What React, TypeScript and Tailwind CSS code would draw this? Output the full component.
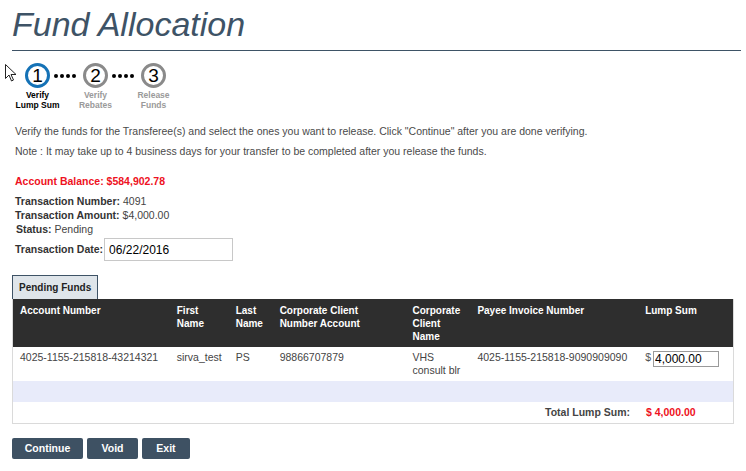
const font = { fontFamily: '"Liberation Sans", Arial, sans-serif' };

const steps = [
  { n: "1", top: "Verify", bottom: "Lump Sum", active: true },
  { n: "2", top: "Verify", bottom: "Rebates", active: false },
  { n: "3", top: "Release", bottom: "Funds", active: false },
];

const Dots = () => (
  <div className="h-[25px] flex items-center gap-[2px] ml-[4px] mr-[7px]">
    {[0, 1, 2, 3].map((d) => (
      <div key={d} className="w-[4px] h-[4px] rounded-full bg-black" />
    ))}
  </div>
);

const Cursor = () => (
  <svg width="12" height="18" viewBox="0 0 12 18" className="mt-[1px] mr-[8px]">
    <path d="M0.5 0.5 L0.5 14.5 L4 11 L6.5 17 L8.5 16 L6 10.5 L11 10.5 Z" fill="#fff" stroke="#222" strokeWidth="1" />
  </svg>
);

const Stepper = () => (
  <div className="flex items-start ml-[5px] mt-[12px]">
    <Cursor />
    {steps.map((s, i) => (
      <div key={s.n} className="flex items-start">
        <div className="w-[25px] flex flex-col items-center">
          <div
            className={
              "w-[25px] h-[25px] rounded-full bg-white flex items-center justify-center text-[19px] leading-none text-black " +
              (s.active ? "border-[3px] border-[#1572b6]" : "border-[3px] border-[#8a8a8a]")
            }
          >
            {s.n}
          </div>
          <div
            className={
              "mt-[2px] text-[8.5px] leading-[10px] font-bold text-center whitespace-nowrap " +
              (s.active ? "text-black" : "text-[#9a9a9a]")
            }
          >
            {s.top}
            <br />
            {s.bottom}
          </div>
        </div>
        {i < steps.length - 1 && <Dots />}
      </div>
    ))}
  </div>
);

const cols = [
  { label: "Account Number", w: "w-[156px]" },
  { label: "First Name", w: "w-[59px]" },
  { label: "Last Name", w: "w-[44px]" },
  { label: "Corporate Client Number Account", w: "w-[133px]" },
  { label: "Corporate Client Name", w: "w-[65px]" },
  { label: "Payee Invoice Number", w: "w-[168px]" },
  { label: "Lump Sum", w: "w-[96px]" },
];

const row = ["4025-1155-215818-43214321", "sirva_test", "PS", "98866707879", "VHS consult blr", "4025-1155-215818-9090909090"];

const Button = ({ children, w }: { children: string; w: string }) => (
  <button className={w + " h-[21px] rounded-[2px] bg-[#3e5163] text-white text-[10.5px] font-bold"}>{children}</button>
);

export default function App() {
  return (
    <div className="w-[746px] h-[471px] bg-white overflow-hidden" style={font}>
      <div className="px-[12px] pt-[4px]">
        <h1 className="text-[34px] leading-[40px] italic text-[#3e5366]">Fund Allocation</h1>
        <div className="mt-[6px] mr-[-7px] h-px bg-[#3e5366]" />
      </div>

      <Stepper />

      <div className="px-[15px] text-[10.5px] text-[#4a4a4a]">
        <p className="mt-[15px] leading-[12px]">
          Verify the funds for the Transferee(s) and select the ones you want to release. Click "Continue" after you are
          done verifying.
        </p>
        <p className="mt-[8px] leading-[12px]">
          Note : It may take up to 4 business days for your transfer to be completed after you release the funds.
        </p>

        <p className="mt-[18px] leading-[12px] font-bold text-[#ee1122]">Account Balance: $584,902.78</p>

        <div className="mt-[7px] leading-[14px] text-[#444]">
          <div>
            <span className="font-bold text-[#333]">Transaction Number:</span> 4091
          </div>
          <div>
            <span className="font-bold text-[#333]">Transaction Amount:</span> $4,000.00
          </div>
          <div className="ml-[1px]">
            <span className="font-bold text-[#333]">Status:</span> Pending
          </div>
        </div>
        <div className="mt-[2px] flex items-center">
          <span className="font-bold text-[#333]">Transaction Date:</span>
          <input
            readOnly
            value="06/22/2016"
            className="ml-[1px] w-[129px] h-[23px] border border-[#c8c8c8] px-[4px] text-[12px] text-black outline-none"
            style={font}
          />
        </div>
      </div>

      <div className="mx-[12px] mt-[14px]">
        <div className="w-[86px] h-[24px] border border-b-0 border-[#3e5366] bg-[#dfe5ea] flex items-center pl-[6px] text-[10px] font-bold text-[#222]">
          Pending Funds
        </div>
        <div className="w-[722px] border border-t-0 border-[#dadada]">
          <div className="flex h-[48px] bg-[#2e2e2e] text-white text-[10px] font-bold leading-[13px]">
            {cols.map((c, i) => (
              <div key={c.label} className={c.w + " pt-[5px] " + (i === 0 ? "pl-[7px]" : "pl-[8px]") + " pr-[6px]"}>
                {c.label}
              </div>
            ))}
          </div>
          <div className="flex h-[34px] text-[10.5px] leading-[13px] text-[#444]">
            {row.map((v, i) => (
              <div key={i} className={cols[i].w + " pt-[4px] " + (i === 0 ? "pl-[7px]" : "pl-[8px]") + " pr-[6px]"}>
                {v}
              </div>
            ))}
            <div className={cols[6].w + " pt-[4px] pl-[8px] flex items-start gap-[2px]"}>
              <span className="text-[#555] leading-[13px]">$</span>
              <input
                readOnly
                value="4,000.00"
                className="w-[66px] h-[16px] border border-[#9a9a9a] px-[1px] text-[12px] leading-[14px] text-black outline-none"
                style={font}
              />
            </div>
          </div>
          <div className="h-[21px] bg-[#e8ebfa]" />
          <div className="flex h-[21px] items-center text-[10.5px] font-bold">
            <div className="w-[625px] pr-[8px] text-right text-[#444]">Total Lump Sum:</div>
            <div className="pl-[8px] text-[#ee1122]">$ 4,000.00</div>
          </div>
        </div>
      </div>

      <div className="mx-[12px] mt-[14px] flex gap-[4px]">
        <Button w="w-[71px]">Continue</Button>
        <Button w="w-[51px]">Void</Button>
        <Button w="w-[48px]">Exit</Button>
      </div>
    </div>
  );
}
